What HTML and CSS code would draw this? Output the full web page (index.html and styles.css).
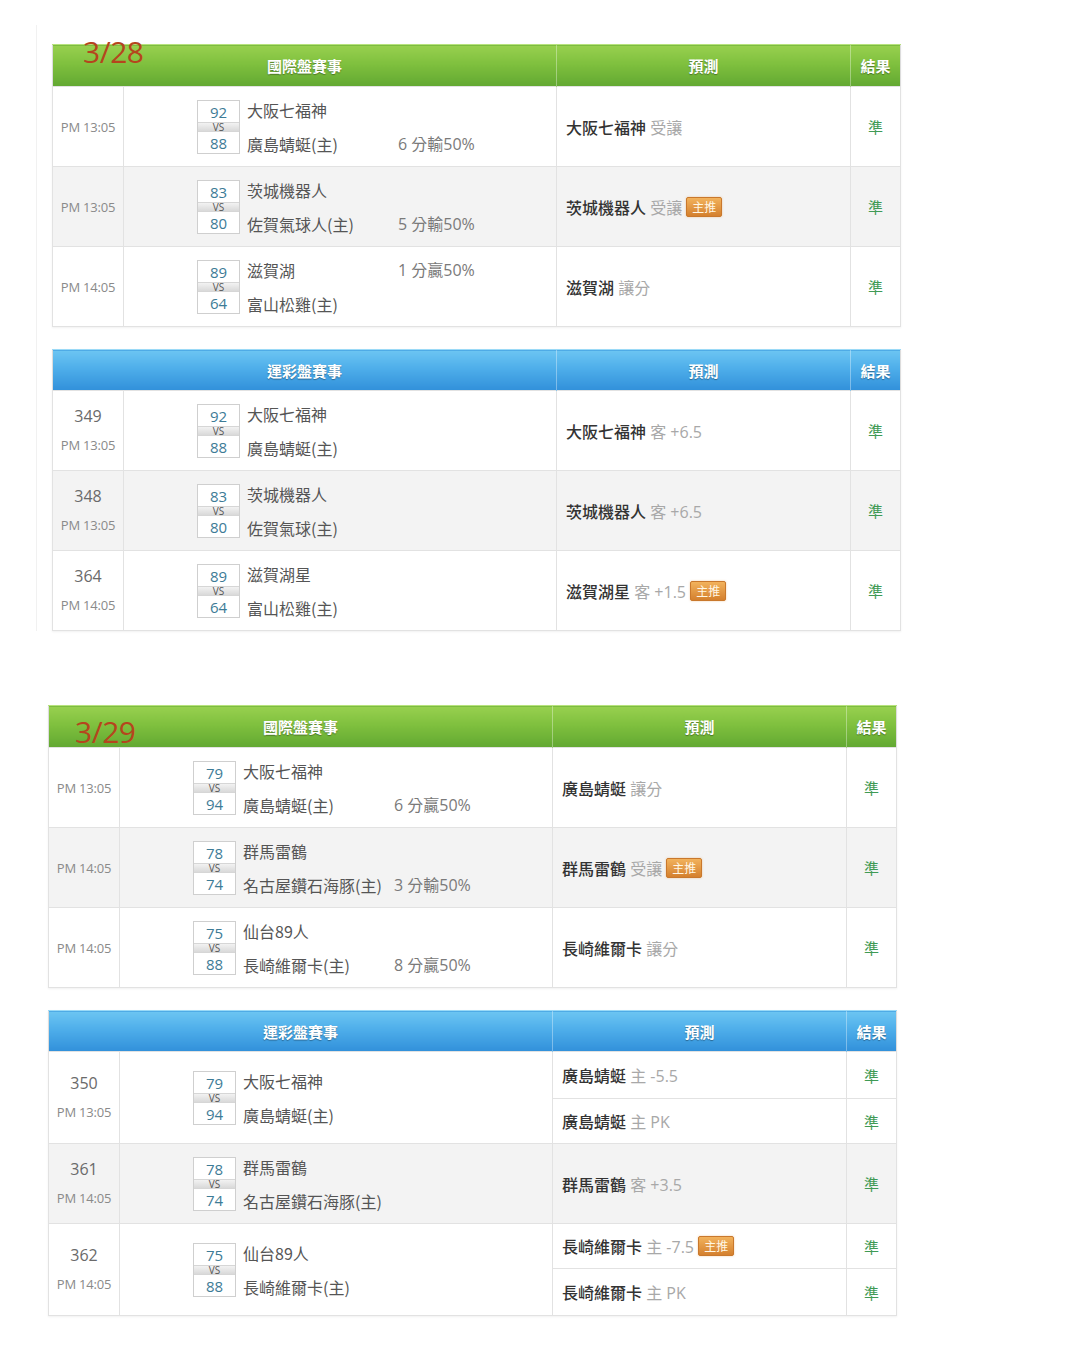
FILE: index.html
```html
<!DOCTYPE html>
<html lang="zh-Hant">
<head>
<meta charset="utf-8">
<title>賽事預測</title>
<link rel="stylesheet" href="styles.css">
</head>
<body>
<div class="day day1">
  <div class="block">
    <div class="date d28">3/28</div>
    <table class="tb green">
      <colgroup><col class="c1"><col class="c2"><col class="c3"><col class="c4"></colgroup>
      <tr class="hd"><th colspan="2">國際盤賽事</th><th>預測</th><th>結果</th></tr>
      <tr class="r">
        <td class="time"><div class="tm">PM 13:05</div></td>
        <td class="mt"><div class="match"><div class="score"><span class="num">92</span><span class="vs">VS</span><span class="num">88</span></div><div class="teams"><div class="team"><span class="nm">大阪七福神</span></div><div class="team"><span class="nm">廣島蜻蜓(主)</span><span class="hc">6 分輸50%</span></div></div></div></td>
        <td class="pred"><span class="pt">大阪七福神</span> <span class="pg">受讓</span></td>
        <td class="res">準</td>
      </tr>
      <tr class="r alt">
        <td class="time"><div class="tm">PM 13:05</div></td>
        <td class="mt"><div class="match"><div class="score"><span class="num">83</span><span class="vs">VS</span><span class="num">80</span></div><div class="teams"><div class="team"><span class="nm">茨城機器人</span></div><div class="team"><span class="nm">佐賀氣球人(主)</span><span class="hc">5 分輸50%</span></div></div></div></td>
        <td class="pred"><span class="pt">茨城機器人</span> <span class="pg">受讓</span> <span class="badge">主推</span></td>
        <td class="res">準</td>
      </tr>
      <tr class="r">
        <td class="time"><div class="tm">PM 14:05</div></td>
        <td class="mt"><div class="match"><div class="score"><span class="num">89</span><span class="vs">VS</span><span class="num">64</span></div><div class="teams"><div class="team"><span class="nm">滋賀湖</span><span class="hc">1 分贏50%</span></div><div class="team"><span class="nm">富山松雞(主)</span></div></div></div></td>
        <td class="pred"><span class="pt">滋賀湖</span> <span class="pg">讓分</span></td>
        <td class="res">準</td>
      </tr>
    </table>
  </div>
  <div class="block">
    <table class="tb blue">
      <colgroup><col class="c1"><col class="c2"><col class="c3"><col class="c4"></colgroup>
      <tr class="hd"><th colspan="2">運彩盤賽事</th><th>預測</th><th>結果</th></tr>
      <tr class="r">
        <td class="time"><div class="gid">349</div><div class="tm">PM 13:05</div></td>
        <td class="mt"><div class="match"><div class="score"><span class="num">92</span><span class="vs">VS</span><span class="num">88</span></div><div class="teams"><div class="team"><span class="nm">大阪七福神</span></div><div class="team"><span class="nm">廣島蜻蜓(主)</span></div></div></div></td>
        <td class="pred"><span class="pt">大阪七福神</span> <span class="pg">客 +6.5</span></td>
        <td class="res">準</td>
      </tr>
      <tr class="r alt">
        <td class="time"><div class="gid">348</div><div class="tm">PM 13:05</div></td>
        <td class="mt"><div class="match"><div class="score"><span class="num">83</span><span class="vs">VS</span><span class="num">80</span></div><div class="teams"><div class="team"><span class="nm">茨城機器人</span></div><div class="team"><span class="nm">佐賀氣球(主)</span></div></div></div></td>
        <td class="pred"><span class="pt">茨城機器人</span> <span class="pg">客 +6.5</span></td>
        <td class="res">準</td>
      </tr>
      <tr class="r">
        <td class="time"><div class="gid">364</div><div class="tm">PM 14:05</div></td>
        <td class="mt"><div class="match"><div class="score"><span class="num">89</span><span class="vs">VS</span><span class="num">64</span></div><div class="teams"><div class="team"><span class="nm">滋賀湖星</span></div><div class="team"><span class="nm">富山松雞(主)</span></div></div></div></td>
        <td class="pred"><span class="pt">滋賀湖星</span> <span class="pg">客 +1.5</span> <span class="badge">主推</span></td>
        <td class="res">準</td>
      </tr>
    </table>
  </div>
</div>

<div class="day day2">
  <div class="block">
    <div class="date d29">3/29</div>
    <table class="tb green">
      <colgroup><col class="c1"><col class="c2"><col class="c3"><col class="c4"></colgroup>
      <tr class="hd"><th colspan="2">國際盤賽事</th><th>預測</th><th>結果</th></tr>
      <tr class="r">
        <td class="time"><div class="tm">PM 13:05</div></td>
        <td class="mt"><div class="match"><div class="score"><span class="num">79</span><span class="vs">VS</span><span class="num">94</span></div><div class="teams"><div class="team"><span class="nm">大阪七福神</span></div><div class="team"><span class="nm">廣島蜻蜓(主)</span><span class="hc">6 分贏50%</span></div></div></div></td>
        <td class="pred"><span class="pt">廣島蜻蜓</span> <span class="pg">讓分</span></td>
        <td class="res">準</td>
      </tr>
      <tr class="r alt">
        <td class="time"><div class="tm">PM 14:05</div></td>
        <td class="mt"><div class="match"><div class="score"><span class="num">78</span><span class="vs">VS</span><span class="num">74</span></div><div class="teams"><div class="team"><span class="nm">群馬雷鶴</span></div><div class="team"><span class="nm">名古屋鑽石海豚(主)</span><span class="hc">3 分輸50%</span></div></div></div></td>
        <td class="pred"><span class="pt">群馬雷鶴</span> <span class="pg">受讓</span> <span class="badge">主推</span></td>
        <td class="res">準</td>
      </tr>
      <tr class="r">
        <td class="time"><div class="tm">PM 14:05</div></td>
        <td class="mt"><div class="match"><div class="score"><span class="num">75</span><span class="vs">VS</span><span class="num">88</span></div><div class="teams"><div class="team"><span class="nm">仙台89人</span></div><div class="team"><span class="nm">長崎維爾卡(主)</span><span class="hc">8 分贏50%</span></div></div></div></td>
        <td class="pred"><span class="pt">長崎維爾卡</span> <span class="pg">讓分</span></td>
        <td class="res">準</td>
      </tr>
    </table>
  </div>
  <div class="block">
    <table class="tb blue">
      <colgroup><col class="c1"><col class="c2"><col class="c3"><col class="c4"></colgroup>
      <tr class="hd"><th colspan="2">運彩盤賽事</th><th>預測</th><th>結果</th></tr>
      <tr class="sub s1">
        <td class="time" rowspan="2"><div class="gid">350</div><div class="tm">PM 13:05</div></td>
        <td class="mt" rowspan="2"><div class="match"><div class="score"><span class="num">79</span><span class="vs">VS</span><span class="num">94</span></div><div class="teams"><div class="team"><span class="nm">大阪七福神</span></div><div class="team"><span class="nm">廣島蜻蜓(主)</span></div></div></div></td>
        <td class="pred"><span class="pt">廣島蜻蜓</span> <span class="pg">主 -5.5</span></td>
        <td class="res">準</td>
      </tr>
      <tr class="sub s2">
        <td class="pred"><span class="pt">廣島蜻蜓</span> <span class="pg">主 PK</span></td>
        <td class="res">準</td>
      </tr>
      <tr class="r alt">
        <td class="time"><div class="gid">361</div><div class="tm">PM 14:05</div></td>
        <td class="mt"><div class="match"><div class="score"><span class="num">78</span><span class="vs">VS</span><span class="num">74</span></div><div class="teams"><div class="team"><span class="nm">群馬雷鶴</span></div><div class="team"><span class="nm">名古屋鑽石海豚(主)</span></div></div></div></td>
        <td class="pred"><span class="pt">群馬雷鶴</span> <span class="pg">客 +3.5</span></td>
        <td class="res">準</td>
      </tr>
      <tr class="sub s3">
        <td class="time" rowspan="2"><div class="gid">362</div><div class="tm">PM 14:05</div></td>
        <td class="mt" rowspan="2"><div class="match"><div class="score"><span class="num">75</span><span class="vs">VS</span><span class="num">88</span></div><div class="teams"><div class="team"><span class="nm">仙台89人</span></div><div class="team"><span class="nm">長崎維爾卡(主)</span></div></div></div></td>
        <td class="pred"><span class="pt">長崎維爾卡</span> <span class="pg">主 -7.5</span> <span class="badge">主推</span></td>
        <td class="res">準</td>
      </tr>
      <tr class="sub s4">
        <td class="pred"><span class="pt">長崎維爾卡</span> <span class="pg">主 PK</span></td>
        <td class="res">準</td>
      </tr>
    </table>
  </div>
</div>
</body>
</html>
```

FILE: styles.css
```css
html, body {
  margin: 0;
  padding: 0;
  background: #ffffff;
}
body {
  font-family: "Open Sans", "Noto Sans CJK TC", sans-serif;
  color: #555;
  width: 1080px;
  height: 1358px;
  overflow: hidden;
}
.day1 {
  margin: 25px 0 0 36px;
  padding: 19px 0 0 15px;
  border-left: 1px solid #f1f1f1;
  display: flex;
  flex-direction: column;
  gap: 22px;
  width: 850px;
}
.day2 {
  margin: 74px 0 0 48px;
  display: flex;
  flex-direction: column;
  gap: 22px;
  width: 850px;
}
.block {
  position: relative;
}
.date {
  position: absolute;
  font-family: "Open Sans", sans-serif;
  font-size: 30px;
  line-height: 30px;
  color: #b5451d;
  letter-spacing: -0.5px;
  z-index: 2;
}
.d28 { left: 31px; top: -7px; }
.d29 { left: 27px; top: 12px; }

.tb {
  border-collapse: collapse;
  table-layout: fixed;
  width: 849px;
  border: 1px solid #dcdcdc;
  box-shadow: 0 1px 2px rgba(0,0,0,0.06);
}
.c1 { width: 71px; }
.c2 { width: 433px; }
.c3 { width: 294px; }
.c4 { width: 50px; }

.hd th {
  height: 41px;
  padding: 0;
  color: #fff;
  font-family: "Noto Sans CJK TC", sans-serif;
  font-weight: 700;
  font-size: 15px;
  text-align: center;
  vertical-align: middle;
  text-shadow: 0 1px 1px rgba(0,0,0,0.35);
  border-left: 1px solid rgba(255,255,255,0.35);
}
.hd th:first-child { border-left: none; }
.green .hd th {
  background: linear-gradient(#98d04f 0%, #7fc03e 45%, #62a832 100%);
  border-top: 1px solid #b7e27c;
}
.blue .hd th {
  background: linear-gradient(#6cc5f2 0%, #4eaeea 45%, #3190da 100%);
  border-top: 1px solid #9bdaf7;
  height: 40px;
}

.tb td {
  border: 1px solid #e2e2e2;
  padding: 0;
  vertical-align: middle;
  background: #fff;
}
.r td { height: 79px; }
.alt td { background: #f3f3f3; }
.sub.s1 td.pred, .sub.s1 td.res { height: 46px; }
.sub.s2 td { height: 44px; }
.sub.s3 td.pred, .sub.s3 td.res { height: 44px; }
.sub.s4 td { height: 46px; }

.time {
  text-align: center;
}
.tm {
  font-size: 13px;
  line-height: 24px;
  color: #8a8a8a;
  letter-spacing: -0.2px;
}
.gid {
  font-size: 16px;
  line-height: 24px;
  color: #6a6a6a;
  margin-bottom: 5px;
}

.match {
  display: flex;
  align-items: center;
  padding-left: 73px;
}
.score {
  width: 41px;
  border: 1px solid #cfcfcf;
  display: flex;
  flex-direction: column;
  background: #fff;
}
.num {
  height: 21px;
  line-height: 22px;
  text-align: center;
  font-size: 15px;
  color: #3d7b96;
}
.vs {
  height: 8px;
  line-height: 9px;
  font-size: 10px;
  text-align: center;
  color: #555;
  background: linear-gradient(#f2f2f2, #d9d9d9);
  border-top: 1px solid #d6d6d6;
  border-bottom: 1px solid #d6d6d6;
}
.teams {
  margin-left: 7px;
  height: 56px;
  display: flex;
  flex-direction: column;
  justify-content: space-between;
  font-family: "Noto Sans CJK TC", sans-serif;
}
.team {
  height: 22px;
  line-height: 22px;
  display: flex;
  white-space: nowrap;
}
.nm {
  display: inline-block;
  min-width: 147px;
  padding-right: 4px;
  font-size: 16px;
  color: #555;
}
.hc {
  font-size: 16px;
  color: #7a7a7a;
  font-family: "Open Sans", "Noto Sans CJK TC", sans-serif;
}

.pred {
  padding-left: 9px !important;
  white-space: nowrap;
}
.pt {
  font-family: "Noto Sans CJK TC", sans-serif;
  font-size: 16px;
  font-weight: 500;
  color: #333;
}
.pg {
  font-family: "Open Sans", "Noto Sans CJK TC", sans-serif;
  font-size: 16px;
  color: #a8a8a8;
}
.badge {
  display: inline-block;
  vertical-align: 2px;
  height: 18px;
  line-height: 18px;
  padding: 0 5px;
  font-family: "Noto Sans CJK TC", sans-serif;
  font-size: 12px;
  color: #fff6e4;
  background: linear-gradient(#f2b25c, #d4802e);
  border: 1px solid #c9782c;
  border-radius: 2px;
  box-shadow: 0 0 2px rgba(230,150,60,0.5);
}
.res {
  text-align: center;
  font-family: "Noto Sans CJK TC", sans-serif;
  font-size: 15px;
  color: #3f9a55;
}
```
